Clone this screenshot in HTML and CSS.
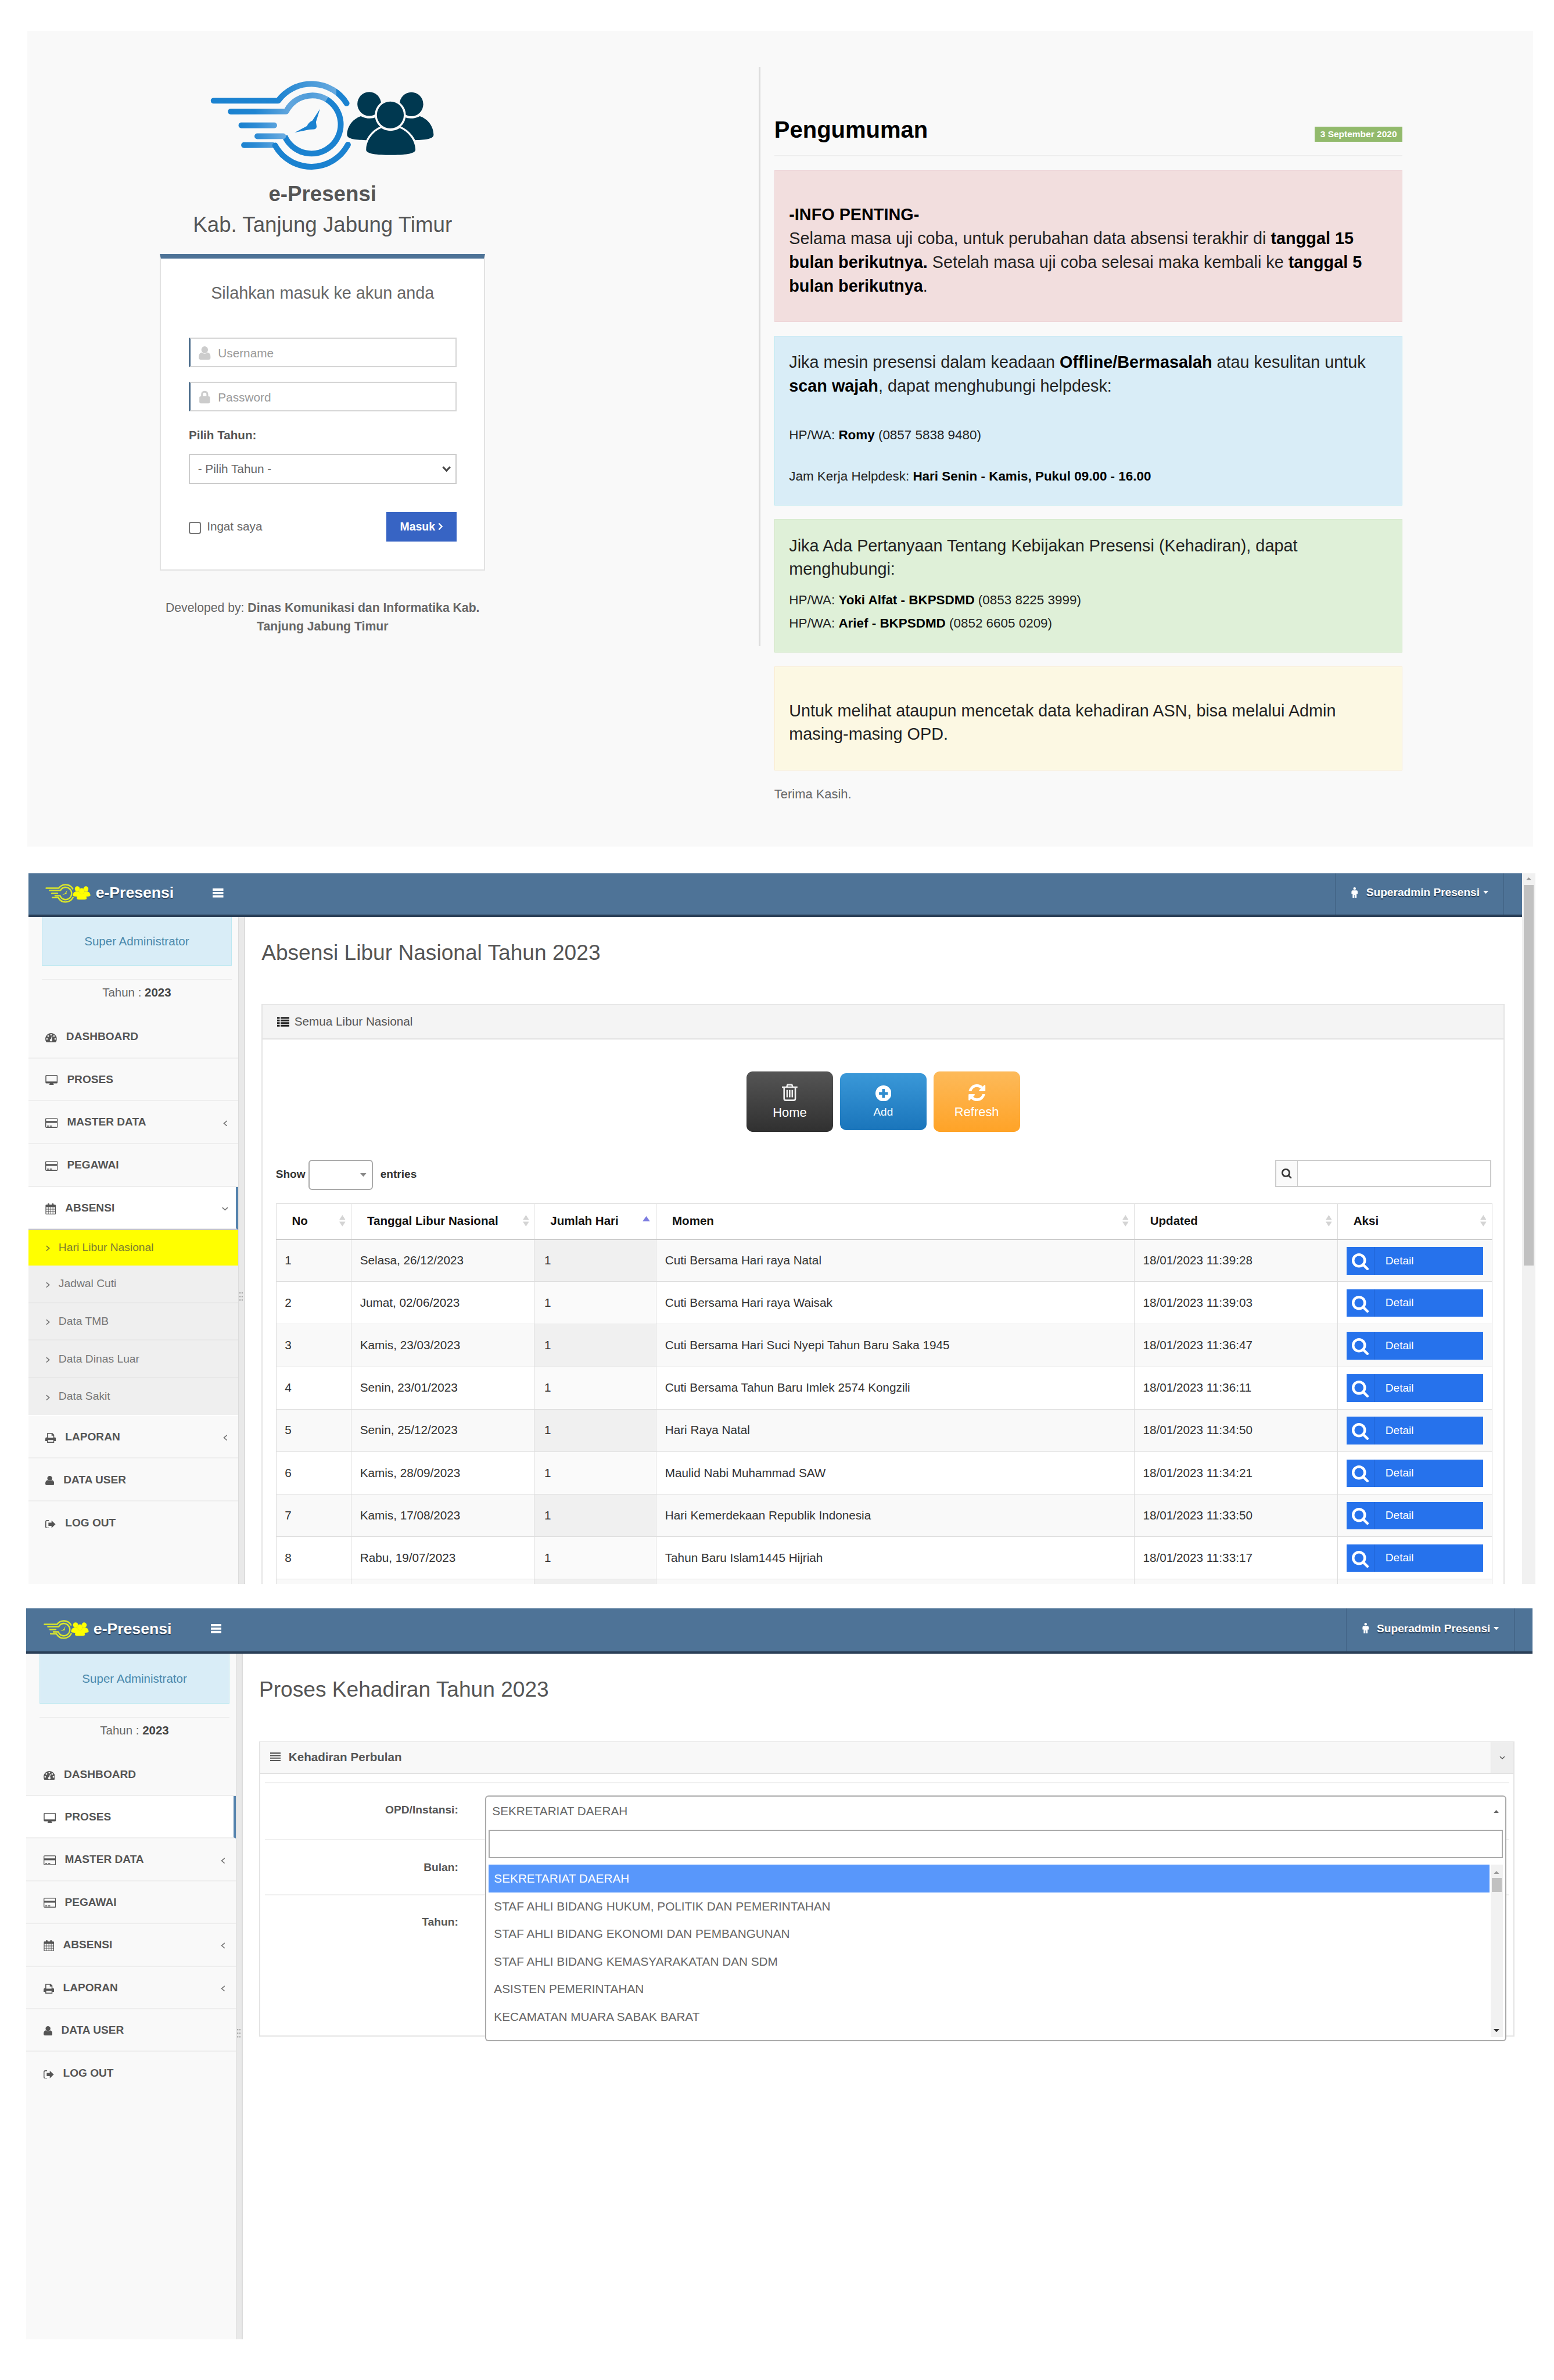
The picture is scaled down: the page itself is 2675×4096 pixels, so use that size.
FILE: index.html
```html
<!DOCTYPE html>
<html lang="id">
<head>
<meta charset="utf-8">
<title>e-Presensi</title>
<link rel="stylesheet" href="styles.css">
</head>
<body>
<svg class="sprite" aria-hidden="true">
  <symbol id="brand" viewBox="38 20 506 204" preserveAspectRatio="none">
    <g fill="none" stroke="#d9e62c" stroke-width="16" stroke-linecap="round" stroke-linejoin="round">
      <path d="M48 67H187A93.3 93.3 0 0 1 341 73"/>
      <path d="M86 91.5H205A65.9 65.9 0 1 1 201.6 147H147"/>
      <path d="M110 122.7H172"/>
      <path d="M116 167H180A93.3 93.3 0 0 0 344 166"/>
    </g>
    <path fill="#d9e62c" d="M281 85.7L272 115L273.5 125L269 131.5L257 132L224 139L252 124L264 112Z"/>
    <g fill="#ffff00">
      <circle cx="392" cy="74.5" r="28"/><circle cx="487" cy="75" r="28"/>
      <path d="M373 102C355 108 342 125 342 144C342 154 365 156 386 156H493C514 156 537 154 537 144C537 125 524 108 506 102Z"/>
      <path d="M419 130C400 137 385 157 385 178C385 188 410 189.5 440 189.5S496 188 496 178C496 157 480 137 461 130Q440 142 419 130Z"/>
    </g>
    <circle cx="440" cy="99" r="31" fill="#ffff00" stroke="#dfe11d" stroke-width="4"/>
  </symbol>
  <symbol id="i-dash" viewBox="0 256 1792 1408" preserveAspectRatio="none"><path d="M384 1152q0-53-37.5-90.5t-90.5-37.5-90.5 37.5-37.5 90.5 37.5 90.5 90.5 37.5 90.5-37.5 37.5-90.5zm192-448q0-53-37.5-90.5t-90.5-37.5-90.5 37.5-37.5 90.5 37.5 90.5 90.5 37.5 90.5-37.5 37.5-90.5zm428 481l101-382q6-26-7.5-48.5t-38.5-29.5-48 6.5-30 39.5l-101 382q-60 5-107 43.5t-63 98.5q-20 77 20 146t117 89 146-20 89-117q16-60-6-117t-72-91zm660-33q0-53-37.5-90.5t-90.5-37.5-90.5 37.5-37.5 90.5 37.5 90.5 90.5 37.5 90.5-37.5 37.5-90.5zm-640-640q0-53-37.5-90.5t-90.5-37.5-90.5 37.5-37.5 90.5 37.5 90.5 90.5 37.5 90.5-37.5 37.5-90.5zm448 192q0-53-37.5-90.5t-90.5-37.5-90.5 37.5-37.5 90.5 37.5 90.5 90.5 37.5 90.5-37.5 37.5-90.5zm320 448q0 261-141 483-19 29-54 29h-1402q-35 0-54-29-141-221-141-483 0-182 71-348t191-286 286-191 348-71 348 71 286 191 191 286 71 348z"/></symbol>
  <symbol id="i-monitor" viewBox="0 0 28 23"><path fill-rule="evenodd" d="M2.5 0H25.5A2.5 2.5 0 0 1 28 2.500V17A2.500 2.500 0 0 1 25.500 19.500H18V21H19V23H9V21H10V19.500H2.500A2.500 2.500 0 0 1 0 17V2.500A2.500 2.500 0 0 1 2.500 0ZM2 2V15H26V2Z"/></symbol>
  <symbol id="i-card" viewBox="0 0 28 22"><path fill-rule="evenodd" d="M2.500 0H25.500A2.500 2.500 0 0 1 28 2.500V19.500A2.500 2.500 0 0 1 25.500 22H2.500A2.500 2.500 0 0 1 0 19.500V2.500A2.500 2.500 0 0 1 2.500 0ZM1.800 1.800V6.500H26.200V1.800ZM1.800 11V20.200H26.200V11ZM4 17H8V19H4ZM10 17H15V19H10Z"/></symbol>
  <symbol id="i-cal" viewBox="0 0 24 26"><path fill-rule="evenodd" d="M5 3V1.500Q5 0 7 0T9 1.500V3H15V1.500Q15 0 17 0T19 1.500V3H22Q24 3 24 5V24Q24 26 22 26H2Q0 26 0 24V5Q0 3 2 3ZM1.700 9V13H6V9ZM7.200 9V13H11.400V9ZM12.600 9V13H16.800V9ZM18 9V13H22.300V9ZM1.700 14.300V18.300H6V14.300ZM7.200 14.300V18.300H11.400V14.300ZM12.600 14.300V18.300H16.800V14.300ZM18 14.300V18.300H22.300V14.300ZM1.700 19.600V24.300H6V19.600ZM7.200 19.600V24.300H11.400V19.600ZM12.600 19.600V24.300H16.800V19.600ZM18 19.600V24.300H22.300V19.600Z"/></symbol>
  <symbol id="i-print" viewBox="0 0 24 22"><path fill-rule="evenodd" d="M4 0H16L20 4V10H21Q24 10 24 13V18H20V22H4V18H0V13Q0 10 3 10H4ZM6 2V11H18V6H14V2ZM6 16V20H18V16Z"/></symbol>
  <symbol id="i-user" viewBox="0 0 20 22" preserveAspectRatio="none"><path d="M10 0A5.300 5.500 0 1 1 10 11.500A5.300 5.500 0 1 1 10 0ZM5 10Q10 14.500 15 10Q20 11 20 18.500Q20 22 16.500 22H3.500Q0 22 0 18.500Q0 11 5 10Z"/></symbol>
  <symbol id="i-out" viewBox="0 0 24 19"><path d="M8 0V2H4Q2 2 2 4V15Q2 17 4 17H8V19H4Q0 19 0 15V4Q0 0 4 0ZM7 6H14V1L23 9.500L14 18V13H7Z"/></symbol>
  <symbol id="i-left" viewBox="0 0 10 14"><path d="M9 1L2 7L9 13" fill="none" stroke="currentColor" stroke-width="2.200"/></symbol>
  <symbol id="i-down" viewBox="0 0 14 9"><path d="M1 1.500L7 7L13 1.500" fill="none" stroke="currentColor" stroke-width="2.200"/></symbol>
  <symbol id="i-right" viewBox="0 0 9 14"><path d="M1 1.500L7.500 7L1 12.500" fill="none" stroke="currentColor" stroke-width="2.200"/></symbol>
  <symbol id="i-bars" viewBox="0 0 24 20"><path d="M0 0H24V5H0ZM0 7.500H24V12.500H0ZM0 15H24V20H0Z"/></symbol>
  <symbol id="i-male" viewBox="0 0 14 24"><path d="M7 0A3 3 0 1 1 7 6A3 3 0 1 1 7 0ZM3 7H11Q14 7 14 10V15H11.500V24H7.500V17H6.500V24H2.500V15H0V10Q0 7 3 7Z"/></symbol>
  <symbol id="i-search" viewBox="64 128 1664 1664"><path d="M1216 832q0-185-131.500-316.500t-316.500-131.500-316.500 131.500-131.500 316.500 131.500 316.500 316.500 131.500 316.500-131.500 131.500-316.500zm512 832q0 52-38 90t-90 38q-54 0-90-38l-343-342q-179 124-399 124-143 0-273.500-55.500t-225-150-150-225-55.500-273.500 55.500-273.500 150-225 225-150 273.500-55.500 273.500 55.500 225 150 150 225 55.500 273.500q0 220-124 399l343 343q37 37 37 90z"/></symbol>
  <symbol id="i-refresh" viewBox="128 128 1536 1536"><path d="M1639 1056q0 5-1 7-64 268-268 434.500t-478 166.500q-146 0-282.500-55t-243.500-157l-129 129q-19 19-45 19t-45-19-19-45v-448q0-26 19-45t45-19h448q26 0 45 19t19 45-19 45l-137 137q71 66 161 102t187 36q134 0 250-65t186-179q11-17 53-117 8-23 30-23h192q13 0 22.500 9.500t9.500 22.500zm25-800v448q0 26-19 45t-45 19h-448q-26 0-45-19t-19-45 19-45l138-138q-148-137-349-137-134 0-250 65t-186 179q-11 17-53 117-8 23-30 23h-199q-13 0-22.500-9.500t-9.500-22.500v-7q65-268 270-434.500t480-166.500q146 0 284 55.500t245 156.500l130-129q19-19 45-19t45 19 19 45z"/></symbol>
  <symbol id="i-sort" viewBox="0 0 14 26"><path d="M7 0L14 11H0ZM7 26L14 15H0Z"/></symbol>
  <symbol id="i-tri-up" viewBox="0 0 10 7" preserveAspectRatio="none"><path d="M5 0L10 7H0Z"/></symbol>
  <symbol id="i-tri-down" viewBox="0 0 10 7" preserveAspectRatio="none"><path d="M0 0H10L5 7Z"/></symbol>
</svg>

<section class="login">
  <div class="login-col">
    <svg class="login-logo" viewBox="0 0 580 240">
      <defs>
        <linearGradient id="g1" gradientUnits="userSpaceOnUse" x1="40" y1="0" x2="345" y2="0">
          <stop offset="0" stop-color="#1b82d0"/><stop offset=".48" stop-color="#1e84d1"/><stop offset=".91" stop-color="#68aadf"/><stop offset=".91" stop-color="#1b82d0"/><stop offset="1" stop-color="#1b82d0"/>
        </linearGradient>
        <linearGradient id="g2" gradientUnits="userSpaceOnUse" x1="79" y1="0" x2="300" y2="0">
          <stop offset="0" stop-color="#1b82d0"/><stop offset=".25" stop-color="#1f85d2"/><stop offset=".6" stop-color="#62a6dd"/><stop offset=".8" stop-color="#4f9cda"/><stop offset="1" stop-color="#6aabe0"/>
        </linearGradient>
        <linearGradient id="g3" gradientUnits="userSpaceOnUse" x1="104" y1="0" x2="200" y2="0">
          <stop offset="0" stop-color="#1b82d0"/><stop offset=".35" stop-color="#2d8bd4"/><stop offset="1" stop-color="#6aabe0"/>
        </linearGradient>
      </defs>
      <g fill="none" stroke-width="13" stroke-linecap="round" stroke-linejoin="round">
        <path stroke="url(#g1)" d="M41.500 67.200L187 67A93.300 93.300 0 0 1 341 73"/>
        <path stroke="url(#g2)" stroke-linecap="butt" d="M80 91.500L205 91.300A65.900 65.900 0 0 1 296 64"/>
        <circle cx="80" cy="91.500" r="6.500" fill="#1b82d0" stroke="none"/>
        <path stroke="#1b82d0" stroke-linecap="butt" d="M296 64A65.900 65.900 0 1 1 201.600 147"/>
        <path stroke="url(#g3)" d="M140 147.200L198 147"/>
        <path stroke="url(#g3)" d="M104 122.700L178 122.600"/>
        <path stroke="url(#g3)" d="M110 167.200L174 167"/>
        <path stroke="#1b82d0" d="M180 168A93.300 93.300 0 0 0 344 166"/>
      </g>
      <path fill="#1b82d0" d="M281 85.700L272 115L273.500 125Q273 131 268 131.500L257 132L224 139L252 124Q255 116 264 112Z"/>
      <g fill="#003850">
        <ellipse cx="392" cy="74.500" rx="26.700" ry="27"/><ellipse cx="487" cy="75" rx="26.700" ry="27"/>
        <path d="M373 102C355 108 342 125 342 144C342 154 365 156 388 156L425 130L408 104Q392 111 373 102Z"/>
        <path d="M506 102C524 108 537 125 537 144C537 154 514 156 491 156L454 130L471 104Q487 111 506 102Z"/>
        <g stroke="#f9f9f9" stroke-width="9" paint-order="stroke">
          <path d="M419 129C400 137 385 157 385 178C385 187 410 189.500 440 189.500S496 187 496 178C496 157 480 137 461 129Q440 141 419 129Z"/>
          <ellipse cx="439.500" cy="99.300" rx="30.300" ry="30.300"/>
        </g>
      </g>
    </svg>
    <div class="login-title"><b>e-Presensi</b></div>
    <div class="login-place">Kab. Tanjung Jabung Timur</div>
    <div class="login-card">
      <div class="login-sub">Silahkan masuk ke akun anda</div>
      <div class="field"><svg><use href="#i-user"/></svg>Username</div>
      <div class="field"><svg viewBox="0 0 24 30"><path fill-rule="evenodd" d="M4 13V9Q4 1 12 1T20 9V13Q24 13 24 16V26Q24 29 21 29H3Q0 29 0 26V16Q0 13 4 13ZM8 13H16V9Q16 5 12 5T8 9Z"/></svg>Password</div>
      <div class="year-label">Pilih Tahun:</div>
      <div class="year-select">- Pilih Tahun -<svg viewBox="0 0 20 13"><path d="M2 2L10 10.500L18 2" fill="none" stroke="#444" stroke-width="4"/></svg></div>
      <div class="login-row"><span class="check"></span><span>Ingat saya</span><span class="masuk">Masuk<svg viewBox="0 0 12 16"><path d="M3 1L10 8L3 15" fill="none" stroke="#fff" stroke-width="3"/></svg></span></div>
    </div>
    <div class="developed">Developed by: <b>Dinas Komunikasi dan Informatika Kab.<br>Tanjung Jabung Timur</b></div>
  </div>
  <div class="divider"></div>
  <div class="news">
    <div class="news-head"><h1>Pengumuman</h1><span class="date">3 September 2020</span></div>
    <div class="note red"><b>-INFO PENTING-</b><br>Selama masa uji coba, untuk perubahan data absensi terakhir di <b>tanggal 15<br>bulan berikutnya.</b> Setelah masa uji coba selesai maka kembali ke <b>tanggal 5<br>bulan berikutnya</b>.</div>
    <div class="note blue">Jika mesin presensi dalam keadaan <b>Offline/Bermasalah</b> atau kesulitan untuk<br><b>scan wajah</b>, dapat menghubungi helpdesk:
      <p class="gap-lg">HP/WA: <b>Romy</b> (0857 5838 9480)</p>
      <p class="gap-md">Jam Kerja Helpdesk: <b>Hari Senin - Kamis, Pukul 09.00 - 16.00</b></p>
    </div>
    <div class="note green">Jika Ada Pertanyaan Tentang Kebijakan Presensi (Kehadiran), dapat<br>menghubungi:
      <p class="gap-sm">HP/WA: <b>Yoki Alfat - BKPSDMD</b> (0853 8225 3999)</p>
      <p>HP/WA: <b>Arief - BKPSDMD</b> (0852 6605 0209)</p>
    </div>
    <div class="note yellow">Untuk melihat ataupun mencetak data kehadiran ASN, bisa melalui Admin<br>masing-masing OPD.</div>
    <div class="thanks">Terima Kasih.</div>
  </div>
</section>

<section class="app app-libur">
  <div class="screen">
    <header class="top">
      <svg class="brand"><use href="#brand"/></svg><span class="brand-name">e-Presensi</span>
      <svg class="burger"><use href="#i-bars"/></svg>
      <div class="account"><svg class="male"><use href="#i-male"/></svg>Superadmin Presensi<svg class="caret"><use href="#i-tri-down"/></svg></div>
    </header>
    <div class="body">
      <nav class="side">
        <div class="role">Super Administrator</div>
        <div class="year">Tahun : <b>2023</b></div>
        <div class="item"><svg class="w25"><use href="#i-dash"/></svg>DASHBOARD</div>
        <div class="item"><svg class="w28"><use href="#i-monitor"/></svg>PROSES</div>
        <div class="item"><svg class="w28"><use href="#i-card"/></svg>MASTER DATA<svg class="chev"><use href="#i-left"/></svg></div>
        <div class="item"><svg class="w28"><use href="#i-card"/></svg>PEGAWAI</div>
        <div class="item active"><svg class="w24"><use href="#i-cal"/></svg>ABSENSI<svg class="chev open"><use href="#i-down"/></svg></div>
        <div class="submenu">
          <div class="sub current"><svg><use href="#i-right"/></svg>Hari Libur Nasional</div>
          <div class="sub"><svg><use href="#i-right"/></svg>Jadwal Cuti</div>
          <div class="sub"><svg><use href="#i-right"/></svg>Data TMB</div>
          <div class="sub"><svg><use href="#i-right"/></svg>Data Dinas Luar</div>
          <div class="sub"><svg><use href="#i-right"/></svg>Data Sakit</div>
        </div>
        <div class="item"><svg class="w24"><use href="#i-print"/></svg>LAPORAN<svg class="chev"><use href="#i-left"/></svg></div>
        <div class="item"><svg class="w20"><use href="#i-user"/></svg>DATA USER</div>
        <div class="item last"><svg class="w24 low"><use href="#i-out"/></svg>LOG OUT</div>
      </nav>
      <div class="gutter"><svg viewBox="0 0 8 20"><path d="M0 0H3V3H0ZM5 0H8V3H5ZM0 8H3V11H0ZM5 8H8V11H5ZM0 16H3V19H0ZM5 16H8V19H5Z"/></svg></div>
      <main class="main">
        <h2>Absensi Libur Nasional Tahun 2023</h2>
        <div class="card">
          <div class="card-head"><svg class="list" viewBox="0 0 28 22"><path d="M0 0H6V4H0ZM8 0H28V4H8ZM0 6H6V10H0ZM8 6H28V10H8ZM0 12H6V16H0ZM8 12H28V16H8ZM0 18H6V22H0ZM8 18H28V22H8Z"/></svg>Semua Libur Nasional</div>
          <div class="card-body">
            <div class="actions">
              <div class="btn home"><svg viewBox="0 0 36 40"><path fill="none" stroke="#eee" stroke-width="3.500" d="M0 7.500H36M11 7L13 2H23L25 7M5 8V34Q5 38 9 38H27Q31 38 31 34V8M12 14V31M18 14V31M24 14V31"/></svg>Home</div>
              <div class="btn add"><svg viewBox="0 0 36 36"><path fill-rule="evenodd" d="M18 0A18 18 0 1 1 18 36A18 18 0 1 1 18 0ZM15 8V15H8V21H15V28H21V21H28V15H21V8Z"/></svg>Add</div>
              <div class="btn refresh"><svg><use href="#i-refresh"/></svg>Refresh</div>
            </div>
            <div class="tools"><b>Show</b><span class="len"><svg><use href="#i-tri-down"/></svg></span><b>entries</b>
              <div class="search"><span><svg><use href="#i-search"/></svg></span></div></div>
            <table>
              <colgroup><col class="c1"><col class="c2"><col class="c3"><col class="c4"><col class="c5"><col class="c6"></colgroup>
              <thead><tr>
                <th><div>No<svg><use href="#i-sort"/></svg></div></th>
                <th><div>Tanggal Libur Nasional<svg><use href="#i-sort"/></svg></div></th>
                <th><div>Jumlah Hari<svg class="asc"><use href="#i-tri-up"/></svg></div></th>
                <th><div>Momen<svg><use href="#i-sort"/></svg></div></th>
                <th><div>Updated<svg><use href="#i-sort"/></svg></div></th>
                <th><div>Aksi<svg><use href="#i-sort"/></svg></div></th>
              </tr></thead>
              <tbody>
                <tr><td>1</td><td>Selasa, 26/12/2023</td><td>1</td><td>Cuti Bersama Hari raya Natal</td><td>18/01/2023 11:39:28</td><td><div class="detail"><i><svg><use href="#i-search"/></svg></i>Detail</div></td></tr>
                <tr><td>2</td><td>Jumat, 02/06/2023</td><td>1</td><td>Cuti Bersama Hari raya Waisak</td><td>18/01/2023 11:39:03</td><td><div class="detail"><i><svg><use href="#i-search"/></svg></i>Detail</div></td></tr>
                <tr><td>3</td><td>Kamis, 23/03/2023</td><td>1</td><td>Cuti Bersama Hari Suci Nyepi Tahun Baru Saka 1945</td><td>18/01/2023 11:36:47</td><td><div class="detail"><i><svg><use href="#i-search"/></svg></i>Detail</div></td></tr>
                <tr><td>4</td><td>Senin, 23/01/2023</td><td>1</td><td>Cuti Bersama Tahun Baru Imlek 2574 Kongzili</td><td>18/01/2023 11:36:11</td><td><div class="detail"><i><svg><use href="#i-search"/></svg></i>Detail</div></td></tr>
                <tr><td>5</td><td>Senin, 25/12/2023</td><td>1</td><td>Hari Raya Natal</td><td>18/01/2023 11:34:50</td><td><div class="detail"><i><svg><use href="#i-search"/></svg></i>Detail</div></td></tr>
                <tr><td>6</td><td>Kamis, 28/09/2023</td><td>1</td><td>Maulid Nabi Muhammad SAW</td><td>18/01/2023 11:34:21</td><td><div class="detail"><i><svg><use href="#i-search"/></svg></i>Detail</div></td></tr>
                <tr><td>7</td><td>Kamis, 17/08/2023</td><td>1</td><td>Hari Kemerdekaan Republik Indonesia</td><td>18/01/2023 11:33:50</td><td><div class="detail"><i><svg><use href="#i-search"/></svg></i>Detail</div></td></tr>
                <tr><td>8</td><td>Rabu, 19/07/2023</td><td>1</td><td>Tahun Baru Islam1445 Hijriah</td><td>18/01/2023 11:33:17</td><td><div class="detail"><i><svg><use href="#i-search"/></svg></i>Detail</div></td></tr>
                <tr><td></td><td></td><td></td><td></td><td></td><td></td></tr>
              </tbody>
            </table>
          </div>
        </div>
      </main>
    </div>
  </div>
  <div class="scroll"><svg><use href="#i-tri-up"/></svg><div class="thumb"></div></div>
</section>

<section class="app app-proses">
  <div class="screen">
    <header class="top">
      <svg class="brand"><use href="#brand"/></svg><span class="brand-name">e-Presensi</span>
      <svg class="burger"><use href="#i-bars"/></svg>
      <div class="account"><svg class="male"><use href="#i-male"/></svg>Superadmin Presensi<svg class="caret"><use href="#i-tri-down"/></svg></div>
    </header>
    <div class="body">
      <nav class="side">
        <div class="role">Super Administrator</div>
        <div class="year">Tahun : <b>2023</b></div>
        <div class="item"><svg class="w25"><use href="#i-dash"/></svg>DASHBOARD</div>
        <div class="item active"><svg class="w28"><use href="#i-monitor"/></svg>PROSES</div>
        <div class="item"><svg class="w28"><use href="#i-card"/></svg>MASTER DATA<svg class="chev"><use href="#i-left"/></svg></div>
        <div class="item"><svg class="w28"><use href="#i-card"/></svg>PEGAWAI</div>
        <div class="item"><svg class="w24"><use href="#i-cal"/></svg>ABSENSI<svg class="chev"><use href="#i-left"/></svg></div>
        <div class="item"><svg class="w24"><use href="#i-print"/></svg>LAPORAN<svg class="chev"><use href="#i-left"/></svg></div>
        <div class="item"><svg class="w20"><use href="#i-user"/></svg>DATA USER</div>
        <div class="item last"><svg class="w24 low"><use href="#i-out"/></svg>LOG OUT</div>
      </nav>
      <div class="gutter"><svg viewBox="0 0 8 20"><path d="M0 0H3V3H0ZM5 0H8V3H5ZM0 8H3V11H0ZM5 8H8V11H5ZM0 16H3V19H0ZM5 16H8V19H5Z"/></svg></div>
      <main class="main">
        <h2>Proses Kehadiran Tahun 2023</h2>
        <div class="card">
          <div class="card-head"><svg class="lines" viewBox="0 0 24 20"><path d="M0 0H24V2.800H0ZM0 5.700H24V8.500H0ZM0 11.400H24V14.200H0ZM0 17.100H24V19.900H0Z"/></svg><b>Kehadiran Perbulan</b><span class="toggle"><svg><use href="#i-down"/></svg></span></div>
          <div class="form">
            <div class="row r1"><label>OPD/Instansi:</label>
              <div class="select">SEKRETARIAT DAERAH<svg><use href="#i-tri-up"/></svg>
                <div class="drop">
                  <div class="filter"></div>
                  <div class="listbox">
                    <ul><li class="hit">SEKRETARIAT DAERAH</li><li>STAF AHLI BIDANG HUKUM, POLITIK DAN PEMERINTAHAN</li><li>STAF AHLI BIDANG EKONOMI DAN PEMBANGUNAN</li><li>STAF AHLI BIDANG KEMASYARAKATAN DAN SDM</li><li>ASISTEN PEMERINTAHAN</li><li>KECAMATAN MUARA SABAK BARAT</li></ul>
                    <div class="mini"><svg class="up"><use href="#i-tri-up"/></svg><div class="thumb"></div><svg class="dn"><use href="#i-tri-down"/></svg></div>
                  </div>
                </div>
              </div>
            </div>
            <div class="row r2"><label>Bulan:</label></div>
            <div class="row r3"><label>Tahun:</label></div>
          </div>
        </div>
      </main>
    </div>
  </div>
</section>
</body>
</html>
```
FILE: styles.css
```css
/* 1rem is one hundred design units */
html { font-size: 76.4286px; }
* { box-sizing: border-box; margin: 0; padding: 0; }
body { width: 35rem; height: 4096px; overflow: hidden; background: #fff; font: .27rem "Liberation Sans", Arial, sans-serif; color: #555; white-space: nowrap; padding-top: .69rem; }
svg { display: block; fill: currentColor; flex: none; }
.sprite { position: absolute; width: 0; height: 0; }

/* login */
.login { margin-left: .62rem; width: 33.91rem; height: 18.37rem; background: #f9f9f9; display: flex; align-items: flex-start; }
.login-col { margin-left: 2.98rem; width: 7.33rem; padding-top: .91rem; }
.login-logo { width: 5.8rem; height: 2.4rem; margin-left: .8rem; }
.login-title { margin-top: .03rem; font-size: .48rem; line-height: .68rem; text-align: center; }
.login-place { font-size: .48rem; line-height: .7rem; text-align: center; }
.login-card { margin-top: .31rem; height: 7.13rem; background: #fff; border: 2px solid #e2e2e2; border-top: .11rem solid #4e7397; padding: .48rem .625rem 0; }
.login-sub { font-size: .377rem; line-height: .6rem; text-align: center; margin-bottom: .7rem; color: #666; }
.field { height: .67rem; border: 2px solid #d5d5d5; border-left: 3px solid #4a6b8a; background: #fff; margin-bottom: .32rem; display: flex; align-items: center; padding: .03rem 0 0 .19rem; font-size: .272rem; color: #999; }
.field svg { width: .27rem; height: .3rem; color: #ccc; margin-right: .16rem; }
.field + .year-label { margin-top: .34rem; }
.year-label { font-weight: bold; line-height: .4rem; margin-bottom: .22rem; }
.year-select { height: .67rem; border: 2px solid #ccc; display: flex; align-items: center; justify-content: space-between; padding: 0 .1rem 0 .18rem; font-size: .272rem; color: #666; }
.year-select svg { width: .2rem; height: .13rem; }
.login-row { margin-top: .63rem; height: .67rem; display: flex; align-items: center; font-size: .27rem; color: #666; }
.check { width: .28rem; height: .28rem; border: 2px solid #777; border-radius: .05rem; margin: .06rem .13rem 0 0; background: #fff; }
.masuk { margin-left: auto; width: 1.58rem; height: 100%; background: #3764c4; color: #fff; font-weight: bold; font-size: .255rem; display: flex; align-items: center; justify-content: center; gap: .05rem; }
.masuk svg { width: .12rem; height: .16rem; }
.developed { margin: .63rem -.1rem 0; font-size: .2775rem; line-height: .42rem; text-align: center; color: #666; }
.divider { width: 3px; height: 13.05rem; margin: .81rem .31rem 0 6.16rem; background: #ddd; }
.news { width: 14.15rem; padding-top: 1.88rem; color: #222; }
.news b { color: #000; }
.news-head { display: flex; justify-content: space-between; height: .95rem; border-bottom: 2px solid #eee; }
.news-head h1 { font-size: .523rem; line-height: .71rem; color: #000; }
.date { margin-top: .28rem; width: 1.98rem; height: .34rem; line-height: .34rem; background: #92ba6c; color: #fff; font-weight: bold; font-size: .203rem; text-align: center; }
.note { margin-top: .31rem; padding: .32rem .32rem 0; font-size: .377rem; line-height: .538rem; border: 1px solid; }
.note p { font-size: .2935rem; line-height: .525rem; }
.red { height: 3.42rem; padding-top: .72rem; background: #f2dede; border-color: #eed5d8; }
.blue { height: 3.82rem; background: #d9edf7; border-color: #bce8f1; }
.green { height: 3.01rem; line-height: .525rem; background: #dff0d8; border-color: #d0e6c4; }
.yellow { height: 2.34rem; padding-top: .72rem; line-height: .525rem; background: #fcf8e3; border-color: #faebcc; }
.blue .gap-lg { margin-top: .57rem; }
.blue .gap-md { margin-top: .41rem; }
.green .gap-sm { margin-top: .18rem; }
.thanks { margin-top: .34rem; font-size: .287rem; line-height: .4rem; color: #666; }

/* application windows */
.app { display: flex; overflow: hidden; }
.screen { flex: 1; display: flex; flex-direction: column; min-width: 0; }
.top { flex: none; background: #4e7397; border-bottom: .065rem solid #2a3f57; display: flex; align-items: center; color: #fff; padding-left: .385rem; }
.brand { width: 1.03rem; height: .43rem; margin: 0 .1rem .02rem 0; }
.brand-name { width: 2.64rem; font-size: .348rem; font-weight: bold; text-shadow: 0 2px 1px #2a3f57; padding-bottom: .05rem; }
.burger { width: .245rem; height: .205rem; margin-bottom: .05rem; }
.account { margin-left: auto; align-self: stretch; width: 3.81rem; border: solid #45678a; border-width: 0 2px; display: flex; align-items: center; padding: 0 0 .07rem .34rem; font-size: .25rem; font-weight: bold; text-shadow: 0 2px 1px #2a3f57; }
.male { width: .15rem; height: .24rem; margin-right: .185rem; }
.caret { width: .12rem; height: .07rem; margin-left: .08rem; }
.body { flex: 1; display: flex; min-height: 0; }
.side { width: 4.72rem; background: #f9f9f9; }
.role { margin: 0 .14rem 0 .3rem; height: 1.1rem; border: 1px solid #bce8f1; border-top: 0; background: #d9edf7; color: #4a89ac; text-align: center; line-height: 1.1rem; font-size: .269rem; }
.year { margin: .305rem .14rem .2rem .3rem; border-top: 2px solid #eee; text-align: center; height: .62rem; line-height: .56rem; font-size: .268rem; color: #666; }
.year b { color: #444; }
.item { height: .964rem; border-bottom: 2px solid #eee; display: flex; align-items: center; padding: .01rem .24rem 0 .385rem; font-size: .25rem; font-weight: bold; color: #555; }
.item svg { margin-right: .205rem; }
.w25 { width: .26rem; height: .205rem; margin-top: .05rem; }
.w28 { width: .28rem; height: .225rem; margin-top: .03rem; }
.w24 { width: .24rem; height: .25rem; margin-top: .04rem; }
.w24.low { height: .19rem; }
.w20 { width: .2rem; height: .21rem; margin-top: .03rem; }
.item .chev { width: .1rem; height: .14rem; margin: .04rem 0 0 auto; color: #777; }
.item .open { width: .14rem; height: .09rem; margin-right: -.02rem; }
.item.active { background: #fff; border-right: .055rem solid #5583ad; padding-right: .185rem; }
.item.last { border-bottom: 0; }
.submenu { background: #efefef; }
.sub { height: .846rem; border-bottom: 2px solid #e8e8e8; display: flex; align-items: center; padding-left: .39rem; font-size: .252rem; color: #777; }
.sub:last-child { border-bottom-color: #fff; }
.sub svg { width: .09rem; height: .14rem; margin: .04rem .2rem 0 0; }
.sub.current { height: .81rem; background: #ff0; border-bottom: 0; border-top: 1px solid #999; color: #7c7c30; padding-bottom: .03rem; }
.gutter { width: .16rem; background: #e9e9e9; border: solid #dcdcdc; border-width: 0 2px 0 1px; display: flex; justify-content: center; }
.gutter svg { width: .08rem; height: .2rem; margin-top: 8.45rem; color: #aaa; }
.main { flex: 1; padding: .46rem 0 0 .37rem; }
h2 { font-weight: normal; font-size: .486rem; line-height: .7rem; color: #555; margin-bottom: .81rem; }
.card { border: 2px solid #e4e4e4; }
.card-head { display: flex; align-items: center; border-bottom: 2px solid #e2e2e2; margin-top: -1px; }

.app-libur { margin: .61rem 0 0 .64rem; width: 33.94rem; height: 16rem; }
.app-libur .top { height: .975rem; }
.app-libur .account { margin-right: .4rem; }
.app-libur .card { width: 28rem; height: 15rem; }
.app-libur .card-head { height: .785rem; background: #f4f4f4; padding-left: .32rem; font-size: .271rem; }
.list { width: .275rem; height: .22rem; margin-right: .12rem; color: #222; }
.card-body { padding: 0 .27rem 0 .295rem; }
.actions { display: flex; justify-content: center; align-items: center; gap: .16rem; padding: .72rem .02rem .62rem 0; }
.btn { width: 1.945rem; height: 1.36rem; border-radius: .14rem; display: flex; flex-direction: column; align-items: center; justify-content: center; color: #fff; font-size: .287rem; gap: .08rem; }
.home { background: linear-gradient(#555, #303030); }
.home svg { width: .35rem; height: .4rem; }
.add { height: 1.28rem; background: linear-gradient(#3a98d8, #1a75bb); font-size: .248rem; gap: .1rem; }
.add svg { width: .36rem; height: .36rem; }
.refresh { background: linear-gradient(#fdba5a, #ffa327); }
.refresh svg { width: .41rem; height: .38rem; }
.tools { display: flex; height: .69rem; align-items: center; font-size: .25rem; color: #333; margin-bottom: .29rem; }
.tools b { padding-bottom: .02rem; }
.len { width: 1.45rem; height: .69rem; border: 2px solid #aaa; border-radius: .08rem; margin: 0 .17rem 0 .07rem; display: flex; align-items: center; justify-content: flex-end; padding-right: .12rem; color: #888; }
.len svg { width: .14rem; height: .08rem; }
.search { margin: 0 .01rem 0 auto; align-self: flex-start; width: 4.86rem; height: .62rem; border: 2px solid #ccc; display: flex; }
.search span { width: .48rem; border-right: 1px solid #ccc; background: #fafafa; display: flex; align-items: center; justify-content: center; }
.search svg { width: .23rem; height: .23rem; }
table { border-collapse: collapse; table-layout: fixed; width: 27.39rem; color: #333; font-size: .271rem; }
.c1 { width: 1.695rem; } .c2 { width: 4.125rem; } .c3 { width: 2.745rem; } .c4 { width: 10.765rem; } .c5 { width: 4.58rem; } .c6 { width: 3.48rem; }
th, td { border: 1px solid #ddd; text-align: left; }
th { height: .805rem; color: #111; font-size: .269rem; padding: 0 .12rem .01rem .35rem; border-bottom: 2px solid #ccc; }
th div { display: flex; align-items: center; justify-content: space-between; }
th svg { width: .14rem; height: .26rem; color: #d4d4d4; }
th .asc { width: .17rem; height: .12rem; color: #7c7ce0; margin-bottom: .1rem; margin-right: .02rem; }
td { height: .957rem; padding: 0 .19rem; line-height: .4rem; }
tbody tr:nth-child(odd) { background: #f9f9f9; }
tbody td:nth-child(3) { background: #fafafa; padding-left: .215rem; }
tbody tr:nth-child(odd) td:nth-child(3) { background: #f0f0f0; }
.detail { height: .62rem; width: 3.08rem; background: #2672ec; color: #fff; font-size: .25rem; display: flex; align-items: center; margin-top: .01rem; }
.detail i { width: .63rem; height: 100%; border-right: 1px solid #1f62d0; display: flex; align-items: center; justify-content: center; margin-right: .25rem; padding-top: .04rem; }
.detail svg { width: .38rem; height: .38rem; }
.scroll { width: .3rem; background: #f1f1f1; display: flex; flex-direction: column; align-items: center; padding-top: .09rem; color: #999; }
.scroll svg { width: .12rem; height: .06rem; margin-bottom: .11rem; }
.scroll .thumb { width: .23rem; height: 8.57rem; background: #c1c1c1; }

.app-proses { margin: .55rem 0 0 .59rem; width: 33.92rem; height: 16.46rem; }
.app-proses .top { height: 1.02rem; }
.app-proses .account { margin-right: .39rem; }
.app-proses .role { height: 1.12rem; line-height: 1.12rem; }
.app-proses .item { height: .96rem; }
.app-proses .gutter { width: .155rem; }
.app-proses h2 { margin-bottom: .82rem; }
.app-proses .card { width: 28.28rem; height: 6.64rem; }
.app-proses .card-head { height: .71rem; background: #f8f8f8; padding-left: .22rem; }
.lines { width: .24rem; height: .2rem; margin-right: .18rem; }
.card-head b, .lines { margin-bottom: .02rem; }
.toggle { margin-left: auto; width: .52rem; align-self: stretch; border-left: 1px solid #ddd; background: #eee; display: flex; align-items: center; justify-content: center; }
.toggle svg { width: .13rem; height: .08rem; }
.form { padding: .185rem .1rem 0; }
.row { display: flex; align-items: flex-start; border-top: 2px solid #f0f0f0; }
.row label { width: 4.36rem; margin-right: .6rem; text-align: right; font-weight: bold; font-size: .251rem; line-height: .4rem; margin-top: .41rem; }
.r1 { height: 1.29rem; } .r2 { height: 1.235rem; }
.select { position: relative; flex: none; width: 23.01rem; height: .7rem; margin-top: .28rem; border: 2px solid #aaa; border-bottom-color: #bbb; border-radius: .08rem .08rem 0 0; background: #fff; display: flex; align-items: center; justify-content: space-between; padding: .01rem .15rem 0 .14rem; font-size: .2715rem; color: #666; }
.select > svg { width: .12rem; height: .07rem; }
.drop { position: absolute; left: -2px; right: -2px; top: 100%; height: 4.86rem; border: 2px solid #aaa; border-top: 0; border-radius: 0 0 .08rem .08rem; background: #fff; padding: .09rem .06rem 0; }
.filter { height: .64rem; border: 2px solid #aaa; margin-bottom: .15rem; }
.listbox { display: flex; height: 3.88rem; }
.listbox ul { list-style: none; width: 22.54rem; margin-right: .03rem; }
.listbox li { height: .622rem; line-height: .622rem; padding-left: .12rem; }
.hit { background: #5897fb; color: #fff; }
.mini { flex: 1; background: #f1f1f1; display: flex; flex-direction: column; align-items: center; padding: .14rem 0 .11rem; color: #999; }
.mini .up { width: .13rem; height: .07rem; }
.mini .thumb { width: .23rem; height: .31rem; margin-top: .09rem; background: #c1c1c1; }
.mini .dn { width: .13rem; height: .07rem; margin-top: auto; color: #333; }
```
